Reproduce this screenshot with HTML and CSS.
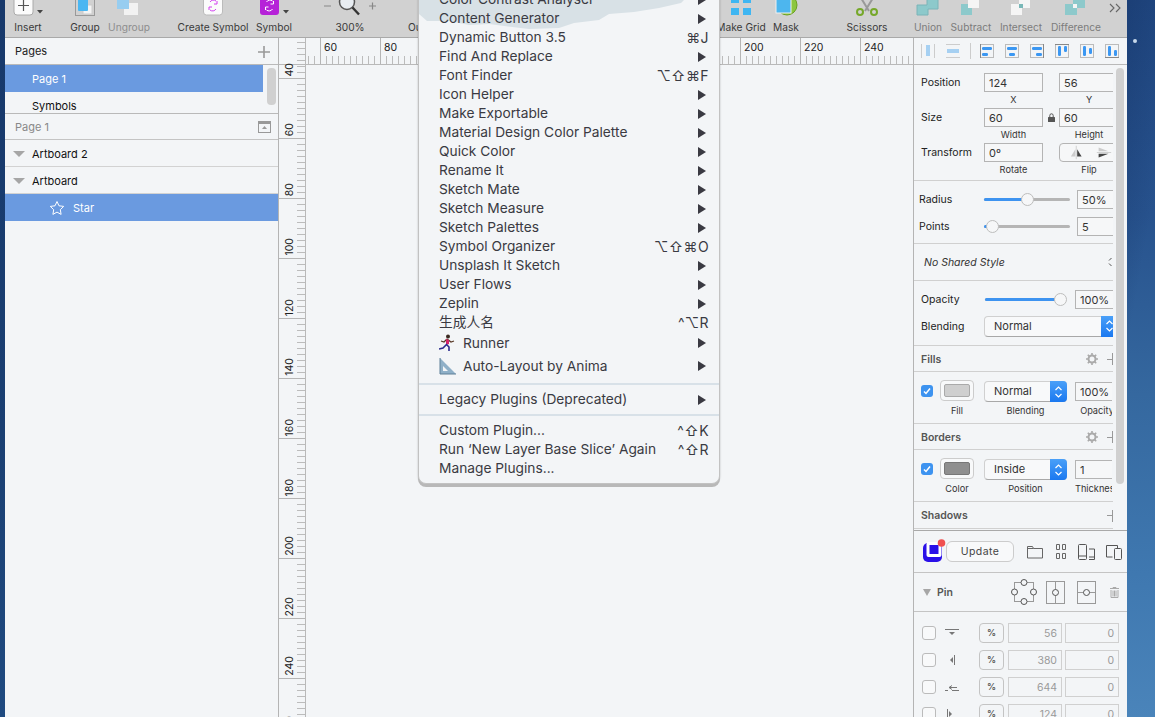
FILE: index.html
```html
<!DOCTYPE html>
<html lang="en">
<head>
<meta charset="utf-8">
<title>Sketch</title>
<link rel="stylesheet" href="styles.css">
</head>
<body>
<div class="desktop">
  <div class="wall wall-left"></div>
  <div class="window">
    <header class="toolbar">
      <div class="tool w46"><svg class="ic" viewBox="0 0 46 19"><rect x="9" y="-6" width="19" height="21" rx="3" fill="#fbfbfb" stroke="#aaa"/><path d="M18.5 0v11M13 5.5h11" stroke="#555" stroke-width="1.2"/><path d="M32 10h6l-3 3.500z" fill="#444"/></svg><span>Insert</span></div>
      <div class="tool w40 ml14"><svg class="ic" viewBox="0 0 40 19"><rect x="10.500" y="-3" width="19" height="18.500" fill="none" stroke="#999"/><rect x="18" y="5" width="9" height="9" fill="#f4f4f4" stroke="#ccc"/><rect x="13" y="-3" width="10" height="14" rx="1" fill="#49b6f2"/></svg><span>Group</span></div>
      <div class="tool w48 off"><svg class="ic" viewBox="0 0 48 19"><rect x="19" y="3" width="14" height="12" fill="#f2f2f2"/><rect x="12" y="-3" width="12" height="12" fill="#97cdf0"/></svg><span>Ungroup</span></div>
      <div class="tool w80 ml20"><svg class="ic" viewBox="0 0 80 19"><rect x="30.500" y="-5" width="19" height="20" rx="3" fill="#fbfbfb" stroke="#bbb"/><path d="M37 2a4 4 0 0 1 6-1M43 9a4 4 0 0 1-6 1M44 1v3h-3M36 10V7h3" fill="none" stroke="#d23ef0" stroke-width="1"/></svg><span>Create Symbol</span></div>
      <div class="tool w42"><svg class="ic" viewBox="0 0 42 19"><rect x="7" y="-5" width="19" height="20" rx="3" fill="#b622d8"/><path d="M13.500 2a4 4 0 0 1 6-1M19.500 9a4 4 0 0 1-6 1M20.500 1v3h-3M12.500 10V7h3" fill="none" stroke="#fff" stroke-width="1"/><path d="M30 10h6l-3 3.500z" fill="#444"/></svg><span>Symbol</span></div>
      <div class="tool w70 ml20"><svg class="ic" viewBox="0 0 70 19"><path d="M9 6h7M54 6h7M57.500 2.500v7" stroke="#888" stroke-width="1.200"/><circle cx="32" cy="2" r="7.500" fill="#e8edf2" stroke="#555" stroke-width="1.500"/><path d="M37.500 7.500l6.500 7" stroke="#333" stroke-width="2.400"/></svg><span>300%</span></div>
      <div class="tool w50 ml23 left"><svg class="ic" viewBox="0 0 50 19"></svg><span>Outlines</span></div>
      <div class="tool w50 ml258"><svg class="ic" viewBox="0 0 50 19"><path d="M15 0h8v3h-8zM27 0h8v3h-8zM15 8h8v7h-8zM27 8h8v7h-8z" fill="#3fb6f2"/></svg><span>Make Grid</span></div>
      <div class="tool w40"><svg class="ic" viewBox="0 0 40 19"><circle cx="21" cy="5" r="10" fill="#8cc63f" stroke="#6aa020"/><rect x="10" y="-3" width="15" height="16" fill="#4db6ee" stroke="#f0f0f0"/></svg><span>Mask</span></div>
      <div class="tool w50 ml36"><svg class="ic" viewBox="0 0 50 19"><path d="M19 -2l8 13M31 -2l-8 13" stroke="#999" stroke-width="2"/><circle cx="18" cy="12" r="3" fill="none" stroke="#76a82a" stroke-width="2"/><circle cx="32" cy="12" r="3" fill="none" stroke="#76a82a" stroke-width="2"/></svg><span>Scissors</span></div>
      <div class="tool w40 ml16 dim"><svg class="ic" viewBox="0 0 40 19"><path d="M9 5h10v-6h11v10h-10v6H9z" fill="#8dc9cb" stroke="#7ab4b8"/></svg><span>Union</span></div>
      <div class="tool w46 dim"><svg class="ic" viewBox="0 0 46 19"><rect x="13" y="4" width="11" height="11" fill="#8dc9cb"/><rect x="20" y="-3" width="11" height="11" fill="#f5f5f5"/></svg><span>Subtract</span></div>
      <div class="tool w54 dim"><svg class="ic" viewBox="0 0 54 19"><rect x="17" y="4" width="11" height="11" fill="#f5f5f5"/><rect x="25" y="-3" width="11" height="11" fill="#f5f5f5"/><rect x="25" y="4" width="4" height="4" fill="#7ab8b8"/></svg><span>Intersect</span></div>
      <div class="tool w56 dim"><svg class="ic" viewBox="0 0 56 19"><rect x="17" y="4" width="12" height="11" fill="#8dc9cb"/><rect x="25" y="-3" width="12" height="11" fill="#8dc9cb"/><rect x="25" y="4" width="4" height="4" fill="#f5f5f5"/></svg><span>Difference</span></div>
      <svg class="more" viewBox="0 0 12 10"><path d="M1 1l4 4-4 4M7 1l4 4-4 4" fill="none" stroke="#666" stroke-width="1.100"/></svg>
    </header>

    <div class="main">
      <aside class="layers">
        <div class="pages-head"><span>Pages</span><svg class="plus" viewBox="0 0 12 12"><path d="M6 0v12M0 6h12" stroke="#999" stroke-width="1.600"/></svg></div>
        <div class="pages-list">
          <div class="page selected">Page 1</div>
          <div class="page">Symbols</div>
          <div class="thumb"></div>
        </div>
        <div class="page-title"><span>Page 1</span><svg class="collapse" viewBox="0 0 13 12"><rect x=".5" y=".5" width="12" height="11" fill="none" stroke="#999"/><path d="M1 2h11" stroke="#999" stroke-width="2"/><path d="M4 8l2.500-3L9 8z" fill="#999"/></svg></div>
        <div class="group"><i class="tri"></i>Artboard 2</div>
        <div class="group"><i class="tri"></i>Artboard</div>
        <div class="layer"><svg class="star" viewBox="0 0 16 16"><path d="M8 1.500l2 4.300 4.700.6-3.400 3.300.8 4.700L8 12.100l-4.100 2.300.8-4.700L1.300 6.400 6 5.800z" fill="none" stroke="#fff"/></svg>Star</div>
      </aside>

      <div class="stage">
        <div class="vruler">
          <div class="corner"></div>
          <div class="vtrack">
            <div class="vseg"><span>40</span></div><div class="vseg"><span>60</span></div><div class="vseg"><span>80</span></div><div class="vseg"><span>100</span></div><div class="vseg"><span>120</span></div><div class="vseg"><span>140</span></div><div class="vseg"><span>160</span></div><div class="vseg"><span>180</span></div><div class="vseg"><span>200</span></div><div class="vseg"><span>220</span></div><div class="vseg"><span>240</span></div><div class="vseg"><span>260</span></div>
          </div>
        </div>
        <div class="canvas">
          <div class="hruler">
            <div class="hseg"><span>40</span></div><div class="hseg"><span>60</span></div><div class="hseg"><span>80</span></div><div class="hseg"><span>100</span></div><div class="hseg"><span>120</span></div><div class="hseg"><span>140</span></div><div class="hseg"><span>160</span></div><div class="hseg"><span>180</span></div><div class="hseg"><span>200</span></div><div class="hseg"><span>220</span></div><div class="hseg"><span>240</span></div>
          </div>
        </div>
      </div>

      <aside class="inspector">
        <div class="props">
          <div class="align">
            <svg class="al" viewBox="0 0 14 14"><path d="M.5 0v14M13.500 0v14" stroke="#ccc"/><rect x="5" y="1" width="4" height="11" fill="#a6d0f2"/></svg>
            <svg class="al" viewBox="0 0 14 14"><path d="M0 .5h14M0 13.500h14" stroke="#ccc"/><rect x="1" y="5" width="12" height="4" fill="#a6d0f2"/></svg>
            <i class="al-sep"></i>
            <svg class="al" viewBox="0 0 14 14"><rect x=".5" y=".5" width="13" height="13" fill="none" stroke="#bbb"/><path d="M.5 0v14" stroke="#888"/><rect x="2" y="3" width="10" height="3" rx="1.200" fill="#3b97f2"/><rect x="2" y="9" width="6" height="3" rx="1.200" fill="#3b97f2"/></svg>
            <svg class="al" viewBox="0 0 14 14"><rect x=".5" y=".5" width="13" height="13" fill="none" stroke="#bbb"/><rect x="2" y="3" width="10" height="3" rx="1.200" fill="#3b97f2"/><rect x="4" y="9" width="6" height="3" rx="1.200" fill="#3b97f2"/></svg>
            <svg class="al" viewBox="0 0 14 14"><rect x=".5" y=".5" width="13" height="13" fill="none" stroke="#bbb"/><path d="M13.500 0v14" stroke="#888"/><rect x="2" y="3" width="10" height="3" rx="1.200" fill="#3b97f2"/><rect x="6" y="9" width="6" height="3" rx="1.200" fill="#3b97f2"/></svg>
            <svg class="al" viewBox="0 0 14 14"><rect x=".5" y=".5" width="13" height="13" fill="none" stroke="#bbb"/><path d="M0 .5h14" stroke="#888"/><rect x="3" y="2" width="3" height="10" rx="1.200" fill="#3b97f2"/><rect x="9" y="2" width="3" height="6" rx="1.200" fill="#3b97f2"/></svg>
            <svg class="al" viewBox="0 0 14 14"><rect x=".5" y=".5" width="13" height="13" fill="none" stroke="#bbb"/><rect x="3" y="2" width="3" height="10" rx="1.200" fill="#3b97f2"/><rect x="9" y="4" width="3" height="6" rx="1.200" fill="#3b97f2"/></svg>
            <svg class="al" viewBox="0 0 14 14"><rect x=".5" y=".5" width="13" height="13" fill="none" stroke="#bbb"/><path d="M0 13.500h14" stroke="#888"/><rect x="3" y="2" width="3" height="10" rx="1.200" fill="#3b97f2"/><rect x="9" y="6" width="3" height="6" rx="1.200" fill="#3b97f2"/></svg>
          </div>

          <section class="geo">
            <div class="frow"><label>Position</label><div class="fld"><b class="inp w59">124</b><small>X</small></div><i class="lock"></i><div class="fld"><b class="inp w59">56</b><small>Y</small></div></div>
            <div class="frow"><label>Size</label><div class="fld"><b class="inp w59">60</b><small>Width</small></div><i class="lock"><svg viewBox="0 0 7 9"><path d="M1.800 4V2.500a1.700 1.700 0 0 1 3.400 0V4" fill="none" stroke="#555"/><rect y="4" width="7" height="5" rx=".5" fill="#555"/></svg></i><div class="fld"><b class="inp w59">60</b><small>Height</small></div></div>
            <div class="frow"><label>Transform</label><div class="fld"><b class="inp w59">0º</b><small>Rotate</small></div><i class="lock"></i><div class="fld"><b class="inp w59 flip"><svg viewBox="0 0 54 19"><path d="M9 14l5-8v8z" fill="#ccc"/><path d="M16 6l5 8h-5z" fill="#444"/><path d="M15 2v15" stroke="#ccc"/><path d="M40 4l11 4H40z" fill="#ccc"/><path d="M40 15l11-4H40z" fill="#444"/><path d="M38 9.500h16" stroke="#ccc"/></svg></b><small>Flip</small></div></div>
          </section>

          <section class="sliders">
            <div class="srow"><label>Radius</label><div class="slider"><i class="fill r50"></i><i class="knob k50"></i></div><b class="inp w36">50%</b></div>
            <div class="srow"><label>Points</label><div class="slider"><i class="fill r5"></i><i class="knob k5"></i></div><b class="inp w36">5</b></div>
          </section>

          <section class="shared"><em>No Shared Style</em><svg class="updown" viewBox="0 0 4 10"><path d="M3.500 1L1 3.500M1 6.500L3.500 9" stroke="#555" fill="none"/></svg></section>

          <section class="blend">
            <div class="orow"><label>Opacity</label><div class="slider short"><i class="fill r100"></i><i class="knob k100"></i></div><b class="inp w37">100%</b></div>
            <div class="brow"><label>Blending</label><div class="select wide"><span>Normal</span><i class="stepper"><svg viewBox="0 0 9 14"><path d="M1.500 5l3-3 3 3M1.500 9l3 3 3-3" fill="none" stroke="#fff" stroke-width="1.200"/></svg></i></div></div>
          </section>

          <div class="sec-head"><strong>Fills</strong><svg class="gear" viewBox="0 0 12 12"><circle cx="6" cy="6" r="3.500" fill="none" stroke="#aaa" stroke-width="2"/><path d="M6 0v2.500M6 9.500V12M0 6h2.500M9.500 6H12M1.800 1.800l1.800 1.800M8.400 8.400l1.800 1.800M1.800 10.200l1.800-1.800M8.400 3.600l1.800-1.800" stroke="#aaa" stroke-width="1.600"/></svg><i class="add"></i></div>
          <section class="style-row">
            <div class="styl-main"><i class="check"><svg viewBox="0 0 12 12"><path d="M3 6.500l2 2 4-5" fill="none" stroke="#fff" stroke-width="1.500"/></svg></i><div class="fld swatch-f"><span class="swatch"><i class="light"></i></span><small>Fill</small></div><div class="fld sel-f"><div class="select mid"><span>Normal</span><i class="stepper"><svg viewBox="0 0 9 14"><path d="M1.500 5l3-3 3 3M1.500 9l3 3 3-3" fill="none" stroke="#fff" stroke-width="1.200"/></svg></i></div><small>Blending</small></div><div class="fld tail"><b class="inp w37">100%</b><small>Opacity</small></div></div>
          </section>
          <div class="sec-head"><strong>Borders</strong><svg class="gear" viewBox="0 0 12 12"><circle cx="6" cy="6" r="3.500" fill="none" stroke="#aaa" stroke-width="2"/><path d="M6 0v2.500M6 9.500V12M0 6h2.500M9.500 6H12M1.800 1.800l1.800 1.800M8.400 8.400l1.800 1.800M1.800 10.200l1.800-1.800M8.400 3.600l1.800-1.800" stroke="#aaa" stroke-width="1.600"/></svg><i class="add"></i></div>
          <section class="style-row">
            <div class="styl-main"><i class="check"><svg viewBox="0 0 12 12"><path d="M3 6.500l2 2 4-5" fill="none" stroke="#fff" stroke-width="1.500"/></svg></i><div class="fld swatch-f"><span class="swatch"><i class="dark"></i></span><small>Color</small></div><div class="fld sel-f"><div class="select mid"><span>Inside</span><i class="stepper"><svg viewBox="0 0 9 14"><path d="M1.500 5l3-3 3 3M1.500 9l3 3 3-3" fill="none" stroke="#fff" stroke-width="1.200"/></svg></i></div><small>Position</small></div><div class="fld tail"><b class="inp w37">1</b><small>Thickness</small></div></div>
          </section>
          <div class="sec-head last"><strong>Shadows</strong><i class="add"></i></div>
          <div class="scroll"></div>
        </div>

        <div class="sync">
          <span class="logo"><svg viewBox="0 0 24 24"><rect x="1" y="4" width="19" height="19" rx="5" fill="#2a10e8"/><rect x="4.500" y="3" width="15" height="15" rx="2" fill="#fff"/><rect x="7.500" y="6" width="9" height="9" fill="#2a10e8"/><circle cx="19.500" cy="4" r="3.800" fill="#f05050"/></svg></span>
          <span class="update">Update</span>
          <svg class="sy-ic folder" viewBox="0 0 16 14"><path d="M.5 13V1.500h5l1 2h9V13z" fill="none" stroke="#666"/><path d="M.5 3.500h6" stroke="#666"/></svg>
          <svg class="sy-ic grid" viewBox="0 0 10 15"><path d="M.5.5h3v5h-3zM6.500.5h3v5h-3zM.5 9.500h3v5h-3zM6.500 9.500h3v5h-3z" fill="none" stroke="#666"/></svg>
          <svg class="sy-ic dev" viewBox="0 0 17 16"><rect x=".5" y=".5" width="8" height="15" rx="1" fill="#f3f5f7" stroke="#555"/><path d="M1 12h7" stroke="#555"/><path d="M11 5h5.500v10.500H11M11 13h5" fill="none" stroke="#555"/></svg>
          <svg class="sy-ic dev" viewBox="0 0 16 16"><path d="M.5 13V1.500h11V4" fill="none" stroke="#555"/><path d="M.5 13h6" stroke="#555"/><rect x="8.500" y="4.500" width="7" height="11" rx="1" fill="none" stroke="#555"/></svg>
        </div>
        <div class="pin-head">
          <i class="tri"></i><strong>Pin</strong>
          <svg class="pin-a" viewBox="0 0 26 26"><rect x="3.500" y="3.500" width="19" height="19" fill="none" stroke="#999"/><g fill="#f3f5f7" stroke="#555"><circle cx="13" cy="3.500" r="3"/><circle cx="13" cy="22.500" r="3"/><circle cx="3.500" cy="13" r="3"/><circle cx="22.500" cy="13" r="3"/></g></svg>
          <svg class="pin-b" viewBox="0 0 19 23"><rect x=".5" y=".5" width="18" height="22" fill="none" stroke="#999"/><path d="M9.500 0v23" stroke="#999"/><circle cx="9.500" cy="11.500" r="3" fill="#f3f5f7" stroke="#555"/></svg>
          <svg class="pin-b" viewBox="0 0 19 23"><rect x=".5" y=".5" width="18" height="22" fill="none" stroke="#999"/><path d="M0 11.500h19" stroke="#999"/><circle cx="9.500" cy="11.500" r="3" fill="#f3f5f7" stroke="#555"/></svg>
          <svg class="trash" viewBox="0 0 9 11"><path d="M0 1.500h9M3 1.500V.5h3v1M1 3v7.500h7V3M3 3.500v6M4.500 3.500v6M6 3.500v6" fill="none" stroke="#aaa"/></svg>
        </div>
        <div class="pins">
          <div class="prow"><i class="pchk"></i><svg class="pi" viewBox="0 0 14 8"><path d="M0 .5h14" stroke="#777"/><path d="M4 3h6L7 6z" fill="#777"/></svg><b class="pct">%</b><b class="pv">56</b><b class="pv">0</b></div>
          <div class="prow"><i class="pchk"></i><svg class="pi" viewBox="0 0 14 10"><path d="M9.500 0v10" stroke="#777"/><path d="M8 2v6L5 5z" fill="#777"/></svg><b class="pct">%</b><b class="pv">380</b><b class="pv">0</b></div>
          <div class="prow"><i class="pchk"></i><svg class="pi" viewBox="0 0 14 8"><path d="M0 7.500h3M7 7.500h7" stroke="#777"/><path d="M4 4.500h8M7 2.500L4 4.500 7 6.500" fill="none" stroke="#777"/></svg><b class="pct">%</b><b class="pv">644</b><b class="pv">0</b></div>
          <div class="prow"><i class="pchk"></i><svg class="pi" viewBox="0 0 14 10"><path d="M2.500 0v10" stroke="#777"/><path d="M4 2v6l3-3z" fill="#777"/></svg><b class="pct">%</b><b class="pv">124</b><b class="pv">0</b></div>
        </div>
      </aside>
    </div>

    <nav class="menu">
      <div class="smear"></div>
      <div class="mi"><span>Color Contrast Analyser</span><i class="arrow"></i></div>
      <div class="mi"><span>Content Generator</span><i class="arrow"></i></div>
      <div class="mi"><span>Dynamic Button 3.5</span><kbd>⌘J</kbd></div>
      <div class="mi"><span>Find And Replace</span><i class="arrow"></i></div>
      <div class="mi"><span>Font Finder</span><kbd>⌥⇧⌘F</kbd></div>
      <div class="mi"><span>Icon Helper</span><i class="arrow"></i></div>
      <div class="mi"><span>Make Exportable</span><i class="arrow"></i></div>
      <div class="mi"><span>Material Design Color Palette</span><i class="arrow"></i></div>
      <div class="mi"><span>Quick Color</span><i class="arrow"></i></div>
      <div class="mi"><span>Rename It</span><i class="arrow"></i></div>
      <div class="mi"><span>Sketch Mate</span><i class="arrow"></i></div>
      <div class="mi"><span>Sketch Measure</span><i class="arrow"></i></div>
      <div class="mi"><span>Sketch Palettes</span><i class="arrow"></i></div>
      <div class="mi"><span>Symbol Organizer</span><kbd>⌥⇧⌘O</kbd></div>
      <div class="mi"><span>Unsplash It Sketch</span><i class="arrow"></i></div>
      <div class="mi"><span>User Flows</span><i class="arrow"></i></div>
      <div class="mi"><span>Zeplin</span><i class="arrow"></i></div>
      <div class="mi"><span>生成人名</span><kbd>^⌥R</kbd></div>
      <div class="mi tall"><svg class="emoji" viewBox="0 0 18 18"><circle cx="9" cy="2.500" r="2" fill="#3a2a20"/><path d="M8 5l4 3 3-1M8 5L5 8 2 7" fill="none" stroke="#5a3a28" stroke-width="1.300"/><path d="M7 5l3 1 0 4-3 1z" fill="#d8246c"/><path d="M7 10l3 3 0 4M7 11l-3 3-4 1" fill="none" stroke="#2a2a8c" stroke-width="1.600"/></svg><span>Runner</span><i class="arrow"></i></div>
      <div class="mi taller"><svg class="emoji" viewBox="0 0 18 18"><path d="M1 1v16h16z" fill="#8fb0c8"/><path d="M4 9v5h5z" fill="#f3f5f7"/><path d="M1 1v16h16" fill="none" stroke="#5f8098"/></svg><span>Auto-Layout by Anima</span><i class="arrow"></i></div>
      <div class="msep"></div>
      <div class="mi"><span>Legacy Plugins (Deprecated)</span><i class="arrow"></i></div>
      <div class="msep"></div>
      <div class="mi"><span>Custom Plugin...</span><kbd>^⇧K</kbd></div>
      <div class="mi"><span>Run ‘New Layer Base Slice’ Again</span><kbd>^⇧R</kbd></div>
      <div class="mi"><span>Manage Plugins...</span></div>
    </nav>
  </div>
  <div class="wall wall-right"><i class="speck"></i></div>
</div>
</body>
</html>
```
FILE: styles.css
```css
* { box-sizing: border-box; }
html, body { margin: 0; height: 100%; overflow: hidden; }
body { font-family: "Inter", "Noto Sans CJK SC", "DejaVu Sans", sans-serif; color: #1d1d1f; font-size: 11px; }
i, em, b, small, kbd { font-style: normal; font-weight: 400; font-family: inherit; }

.desktop { display: flex; width: 1155px; height: 717px; overflow: hidden; }
.wall { flex: none; }
.wall-left { width: 5px; background: linear-gradient(#17386a, #1a3f72 60%, #1f4a80); }
.wall-right { position: relative; width: 28px; background: linear-gradient(100deg, rgba(20,50,100,.45), transparent 40%), linear-gradient(#224a85 0, #27528d 30%, #35689f 55%, #3f78b0 80%, #4a84ba 100%); }
.speck { position: absolute; left: 6px; top: 39px; width: 4px; height: 4px; border-radius: 50%; background: #c8d8ea; }
.window { position: relative; flex: none; width: 1122px; height: 717px; display: flex; flex-direction: column; overflow: hidden; background: #f3f5f7; }

/* toolbar */
.toolbar { flex: none; height: 38px; display: flex; align-items: flex-start; background: #d1d1d1; border-bottom: 1px solid #a9a9a9; }
.tool { flex: none; display: flex; flex-direction: column; align-items: center; color: #3a3a3a; font-size: 10.2px; line-height: 14px; white-space: nowrap; }
.tool.left { align-items: flex-start; }
.tool span { display: block; margin-top: 1px; }
.tool.off span { color: #8e8e8e; }
.tool.dim span { color: #7c7c7c; }
.ic { display: block; width: 100%; height: 19px; overflow: hidden; }
.w40 { width: 40px; } .w42 { width: 42px; } .w46 { width: 46px; } .w48 { width: 48px; } .w50 { width: 50px; } .w54 { width: 54px; } .w56 { width: 56px; } .w70 { width: 70px; } .w80 { width: 80px; }
.ml14 { margin-left: 14px; } .ml16 { margin-left: 16px; } .ml20 { margin-left: 20px; } .ml23 { margin-left: 23px; } .ml36 { margin-left: 36px; } .ml258 { margin-left: 258px; }
.more { flex: none; width: 12px; height: 10px; margin: 3px 0 0 5px; }

.main { flex: 1; display: flex; min-height: 0; }

/* layers */
.layers { flex: none; width: 274px; border-right: 1px solid #b4b4b4; background: #f3f5f7; font-size: 11px; }
.pages-head { height: 27px; display: flex; align-items: center; justify-content: space-between; padding: 0 8px 0 10px; border-bottom: 1px solid #b9b9b9; color: #222; }
.plus { width: 12px; height: 12px; margin-top: 1px; }
.pages-list { position: relative; height: 49px; overflow: hidden; border-bottom: 1px solid #b9b9b9; }
.page { height: 27px; width: 258px; padding-left: 27px; line-height: 28px; color: #111; }
.page.selected { background: #6a9ae0; color: #fff; }
.thumb { position: absolute; left: 262px; top: 3px; width: 9px; height: 37px; border-radius: 4px; background: #d0d0d0; }
.page-title { height: 26px; display: flex; align-items: center; justify-content: space-between; padding: 0 7px 0 10px; border-bottom: 1px solid #c4c4c4; color: #888; }
.collapse { width: 13px; height: 12px; }
.group { height: 27px; display: flex; align-items: center; padding: 1px 0 0 27px; position: relative; border-bottom: 1px solid #d2d2d2; color: #111; }
.tri { display: block; width: 0; height: 0; border-left: 6px solid transparent; border-right: 6px solid transparent; border-top: 6px solid #a6a6a6; }
.group .tri { position: absolute; left: 8px; top: 11px; }
.layer { height: 27px; display: flex; align-items: center; gap: 8px; padding-left: 44px; background: #6a9ae0; color: #fff; }
.star { width: 16px; height: 16px; }

/* stage */
.stage { flex: 1; display: flex; min-width: 0; }
.vruler { flex: none; width: 27px; border-right: 1px solid #b9b9b9; overflow: hidden; display: flex; flex-direction: column; }
.corner { flex: none; height: 27px; border-bottom: 1px solid #b9b9b9; }
.vtrack { margin-top: -46px; flex: none; }
.vseg { position: relative; height: 60px; display: flex; align-items: flex-end; padding: 0 0 3px 5px; color: #222; font-size: 10.5px; background: linear-gradient(#b5b5b5, #b5b5b5) left bottom / 100% 1px no-repeat, repeating-linear-gradient(0deg, #bcbcbc 0 1px, transparent 1px 6px) right bottom / 8px 100% no-repeat; }
.vseg span { writing-mode: vertical-rl; transform: rotate(180deg); line-height: 12px; }
.canvas { flex: 1; min-width: 0; overflow: hidden; }
.hruler { height: 27px; display: flex; margin-left: -46px; border-bottom: 1px solid #b9b9b9; }
.hseg { flex: none; width: 60px; padding: 4px 0 0 4px; line-height: 12px; color: #222; font-size: 10.5px; background: linear-gradient(#b5b5b5, #b5b5b5) left top / 1px 100% no-repeat, repeating-linear-gradient(90deg, #bcbcbc 0 1px, transparent 1px 6px) left bottom / 100% 8px no-repeat; }

/* inspector */
.inspector { flex: none; width: 214px; border-left: 1px solid #b4b4b4; display: flex; flex-direction: column; background: #f3f5f7; overflow: hidden; }
.props { position: relative; flex: none; height: 493px; border-bottom: 1px solid #a9a9a9; font-size: 10.5px; }
.scroll { position: absolute; left: 202px; top: 30px; width: 8px; height: 416px; border-radius: 4px; background: #d0d0d0; }
.props > * { width: 199px; overflow: hidden; }
.props > .scroll { width: 8px; }
.props > .align { width: 213px; height: 27px; display: flex; align-items: center; gap: 11px; padding-left: 7px; border-bottom: 1px solid #b9b9b9; }
.al { flex: none; width: 14px; height: 14px; }
.al-sep { width: 1px; height: 16px; background: #ccc; margin: 0 -2px 0 -1px; }
label { display: block; flex: none; color: #222; }
.inp { display: block; flex: none; height: 19px; padding-left: 4px; background: #f6f7f8; border: 1px solid #b4b4b4; font-size: 11px; line-height: 18px; color: #333; white-space: nowrap; }
.w59 { width: 59px; } .w36 { width: 45px; } .w37 { width: 45px; }
.fld { display: flex; flex-direction: column; align-items: center; flex: none; }
small { display: block; font-size: 9.2px; line-height: 11px; color: #333; margin-top: 2px; white-space: nowrap; }
.geo { padding-top: 8px; height: 116px; border-bottom: 1px solid #d0d0d0; display: flex; flex-direction: column; gap: 3px; }
.frow { display: flex; height: 32px; padding-left: 7px; }
.frow label { width: 63px; line-height: 20px; }
.frow .lock { flex: none; width: 16px; display: flex; align-items: center; justify-content: center; height: 19px; }
.lock svg { width: 7px; height: 9px; }
.frow .fld:last-child { width: 60px; }
.frow .fld:last-child .inp { width: 60px; }
.flip { padding: 0; border-radius: 4px 0 0 4px; }
.flip svg { display: block; width: 54px; height: 17px; }
.sliders { height: 63px; padding: 9px 0 0 5px; border-bottom: 1px solid #d0d0d0; display: flex; flex-direction: column; gap: 8px; }
.srow { display: flex; align-items: center; height: 19px; }
.srow label { width: 65px; }
.slider { position: relative; flex: none; width: 86px; height: 3px; border-radius: 2px; background: #b5b5b5; }
.slider.short { width: 75px; background: #b5b5b5; }
.srow .inp { margin-left: 7px; }
.fill { position: absolute; left: 0; top: 0; height: 3px; border-radius: 2px; background: #3d93f0; }
.r50 { width: 40px; } .r5 { width: 4px; } .r100 { width: 70px; }
.knob { position: absolute; top: -5px; width: 13px; height: 13px; border-radius: 50%; background: #f6f7f8; border: 1px solid #bdbdbd; }
.k50 { left: 37px; } .k5 { left: 2px; } .k100 { left: 69px; }
.shared { height: 37px; display: flex; align-items: center; justify-content: space-between; padding: 0 1px 0 10px; border-bottom: 1px solid #d0d0d0; }
.shared em { font-style: italic; color: #333; }
.updown { width: 4px; height: 10px; }
.blend { height: 65px; padding: 9px 0 0 7px; border-bottom: 1px solid #d0d0d0; }
.orow { display: flex; align-items: center; height: 19px; }
.orow label { width: 64px; }
.orow .inp { margin-left: 15px; }
.brow { display: flex; align-items: center; height: 20px; margin-top: 7px; }
.brow label { width: 63px; }
.select { position: relative; flex: none; height: 21px; padding-left: 9px; line-height: 19px; font-size: 11px; color: #333; background: #f8f9fa; border: 1px solid #d0d0d0; border-bottom-color: #a8a8a8; border-radius: 4px; }
.select.wide { width: 134px; }
.select.mid { width: 83px; }
.stepper { position: absolute; right: -1px; top: -1px; bottom: -1px; width: 17px; background: linear-gradient(#4aa0f8, #1a78f0); border-radius: 0 4px 4px 0; display: flex; align-items: center; justify-content: center; }
.stepper svg { width: 9px; height: 14px; }
.sec-head { height: 26px; display: flex; align-items: center; padding: 1px 0 0 7px; border-bottom: 1px solid #d0d0d0; }
.sec-head.last { height: 27px; border-bottom: 1px solid #d0d0d0; }
.sec-head strong { flex: 1; font-size: 10.5px; font-weight: 600; color: #555; }
.gear { width: 12px; height: 12px; margin-right: 8px; }
.add { display: block; position: relative; flex: none; width: 7px; height: 12px; border-right: 1px solid #999; }
.add::before { content: ""; position: absolute; left: 1px; top: 5.5px; width: 5px; height: 1px; background: #999; }
.style-row { height: 52px; border-bottom: 1px solid #d0d0d0; }
.styl-main { display: flex; padding: 8px 0 0 7px; }
.check { display: block; flex: none; width: 12px; height: 12px; margin: 5px 7px 0 0; border-radius: 3px; background: #3d93f0; }
.check svg { display: block; width: 12px; height: 12px; }
.swatch-f { width: 34px; }
.swatch-f small { margin-top: 4px; }
.swatch { display: block; width: 34px; height: 21px; padding: 3px 3px; border: 1px solid #ccc; border-radius: 4px; background: #f8f9fa; }
.swatch i { display: block; height: 13px; border-radius: 2px; border: 1px solid #aaa; }
.light { background: #cfcfcf; } .dark { background: #8f8f8f; border-color: #777 !important; }
.sel-f { margin: 1px 0 0 10px; }
.sel-f small { margin-top: 3px; }
.tail { margin-left: 8px; width: 37px; align-items: flex-start; overflow: hidden; }
.tail .inp { margin-top: 2px; }
.tail small { width: 44px; margin-top: 4px; text-align: center; }

/* sync & pin */
.sync { flex: none; height: 42px; display: flex; align-items: center; padding: 0 0 0 8px; border-bottom: 1px solid #c4c4c4; }
.logo { flex: none; width: 24px; height: 24px; margin-top: -1px; }
.logo svg { display: block; }
.update { flex: none; width: 68px; height: 21px; text-align: center; line-height: 19px; font-size: 10.5px; letter-spacing: .4px; color: #444; border: 1px solid #ccc; border-radius: 6px; background: #f8f9fa; }
.sy-ic { flex: none; display: block; }
.folder { width: 16px; height: 14px; margin-left: 13px; }
.grid { width: 10px; height: 15px; margin-left: 13px; }
.dev { width: 17px; height: 16px; margin-left: 12px; }
.dev + .dev { width: 16px; margin-left: 11px; }
.pin-head { flex: none; height: 39px; display: flex; align-items: center; padding-left: 9px; border-bottom: 1px solid #c4c4c4; }
.pin-head strong { font-size: 10.5px; font-weight: 600; color: #555; margin-left: 6px; width: 74px; }
.pin-head .tri { border-top-width: 7px; border-left-width: 4.5px; border-right-width: 4.5px; }
.pin-a { width: 26px; height: 26px; }
.pin-b { width: 19px; height: 23px; margin-left: 9px; }
.pin-b + .pin-b { margin-left: 12px; }
.trash { width: 9px; height: 11px; margin-left: 14px; }
.pins { padding: 11px 0 0 8px; display: flex; flex-direction: column; gap: 7px; }
.prow { display: flex; align-items: center; height: 20px; }
.pchk { flex: none; width: 14px; height: 14px; border: 1px solid #bbb; border-radius: 3px; margin-right: 9px; background: #f8f9fa; }
.pi { flex: none; width: 14px; height: 10px; margin-right: 20px; }
.pct { flex: none; width: 25px; height: 20px; margin-right: 4px; text-align: center; line-height: 18px; font-size: 9px; font-weight: 600; color: #555; border: 1px solid #c4c4c4; border-radius: 4px; }
.pv { flex: none; width: 54px; height: 20px; margin-right: 3px; padding-right: 4px; text-align: right; line-height: 20px; font-size: 10.5px; color: #9a9a9a; border: 1px solid #d0d0d0; }

/* menu */
.menu { position: absolute; left: 413px; top: -10px; width: 302px; height: 494px; background: #f3f5f7; border: solid #c2c2c2; border-width: 0 1.500px 1px; border-radius: 0 0 8px 8px; box-shadow: 0 3px 0 #b8b8b8, 0 0 2px rgba(0,0,0,.25); font-size: 13.75px; color: #3a3a42; }
.smear { position: absolute; left: 0; top: 10px; width: 299px; height: 30px; background: #d8e1e6; clip-path: polygon(0 0, 265px 0, 262px 3px, 240px 8px, 215px 12px, 190px 14px, 180px 20px, 155px 23px, 140px 28px, 110px 29px, 70px 24px, 50px 25px, 30px 21px, 8px 21px, 0 14px); }
.mi { position: relative; height: 19px; display: flex; align-items: center; padding: 0 10px 0 20px; line-height: 19px; white-space: nowrap; }
.mi.tall { height: 22px; }
.mi.taller { height: 24px; }
.mi span { flex: 1; }
.emoji { flex: none; width: 18px; height: 18px; margin-right: 6px; }
.arrow { flex: none; width: 0; height: 0; margin-right: 3.500px; border-left: 8px solid #3a3a42; border-top: 5px solid transparent; border-bottom: 5px solid transparent; }
kbd { flex: none; font-size: 14px; letter-spacing: .4px; font-family: "Inter", "DejaVu Sans", sans-serif; }
.msep { height: 12px; position: relative; }
.msep::after { content: ""; position: absolute; left: 0; right: 0; top: 5px; height: 2px; background: #d8e1e8; }
```
